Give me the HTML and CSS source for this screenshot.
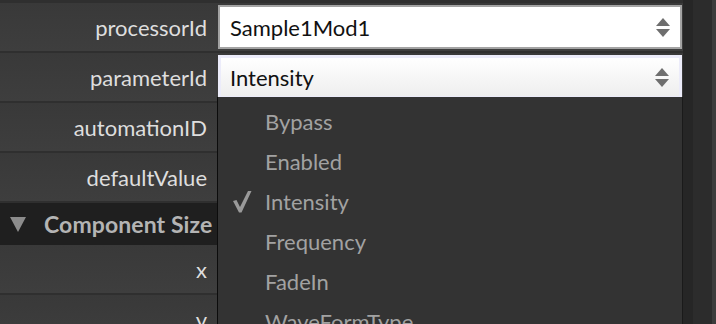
FILE: index.html
```html
<!DOCTYPE html>
<html lang="en">
<head>
  <meta charset="UTF-8" />
  <title>Property Editor</title>
  <link rel="stylesheet" href="styles.css">
</head>
<body>

  <div class="editor">
    <div class="props">
      <div class="row">
        <div class="label">processorId</div>
        <div class="value">
          <div class="combo">
            <span>Sample1Mod1</span>
            <svg class="arrows" width="14" height="20" viewBox="0 0 14 20">
              <path d="M7 1 L14 9 L0 9 Z" fill="#6e6e6e"/>
              <path d="M0 12 L14 12 L7 20 Z" fill="#6e6e6e"/>
            </svg>
          </div>
        </div>
      </div>

      <div class="row">
        <div class="label">parameterId</div>
        <div class="value">
          <div class="combo open">
            <span>Intensity</span>
            <svg class="arrows" width="14" height="20" viewBox="0 0 14 20">
              <path d="M7 1 L14 9 L0 9 Z" fill="#6e6e6e"/>
              <path d="M0 12 L14 12 L7 20 Z" fill="#6e6e6e"/>
            </svg>
          </div>
        </div>
      </div>

      <div class="row">
        <div class="label">automationID</div>
        <div class="value"></div>
      </div>

      <div class="row">
        <div class="label">defaultValue</div>
        <div class="value"></div>
      </div>

      <div class="section">
        <svg class="toggle" width="16" height="15" viewBox="0 0 16 15">
          <path d="M0 0 L16 0 L8 15 Z" fill="#8c8c8c"/>
        </svg>
        <span>Component Size</span>
      </div>

      <div class="row">
        <div class="label">x</div>
        <div class="value"></div>
      </div>

      <div class="row">
        <div class="label">y</div>
        <div class="value"></div>
      </div>

      <div class="popup">
        <div class="item">Bypass</div>
        <div class="item">Enabled</div>
        <div class="item checked">
          <svg class="tick" width="20" height="22" viewBox="0 0 20 22">
            <path d="M1 10 L4.5 9 L8 16 L16 0 L19.5 0 L9.5 21.5 L7 21.5 Z" fill="#9a9a9a"/>
          </svg>
          Intensity
        </div>
        <div class="item">Frequency</div>
        <div class="item">FadeIn</div>
        <div class="item">WaveFormType</div>
      </div>
    </div>

    <div class="scroll">
      <div class="track"></div>
      <div class="edge"></div>
    </div>
  </div>

</body>
</html>
```

FILE: styles.css
```css
* {
  box-sizing: border-box;
}

body {
  margin: 0;
  padding: 0;
  background: #2f2f2f;
  font-family: Lato, 'Noto Sans', sans-serif;
  height: 100vh;
  overflow: hidden;
}

.editor {
  display: flex;
  height: 100vh;
}

.props {
  position: relative;
  width: 683px;
  padding-top: 3px;
  display: flex;
  flex-direction: column;
  gap: 2px;
  overflow: hidden;
  background: #2f2f2f;
}

.row {
  display: grid;
  grid-template-columns: 217px 1fr;
  height: 48px;
  flex-shrink: 0;
  background: linear-gradient(#393939, #3e3e3e);
}

.label {
  display: flex;
  align-items: center;
  justify-content: flex-end;
  padding-right: 10px;
  padding-top: 1px;
  color: #dedede;
  font-size: 22px;
}

.value {
  display: flex;
  align-items: center;
  padding-right: 1px;
}

.combo {
  flex: 1;
  height: 44px;
  margin-left: 1px;
  display: flex;
  align-items: center;
  justify-content: space-between;
  padding: 0 10px 0 10px;
  background: #fff;
  border: 2px solid #a3a3a3;
  color: #111;
  font-size: 22px;
}

.combo.open {
  border: 3px solid #ececfa;
  background: linear-gradient(#ffffff, #eeeeee);
  padding-left: 9px;
}

.section {
  display: flex;
  align-items: center;
  gap: 18px;
  height: 42px;
  flex-shrink: 0;
  margin-bottom: -2px;
  padding-left: 10px;
  background: #1f1f1f;
  color: #b4b4b4;
  font-size: 23px;
  font-weight: bold;
  letter-spacing: 0.1px;
}

.toggle {
  flex-shrink: 0;
}

.popup {
  position: absolute;
  top: 97px;
  left: 217px;
  right: 0;
  bottom: 0;
  padding-top: 4px;
  background: #333333;
  border-left: 1px solid #0c0c0c;
  border-right: 1px solid #1a1a1a;
}

.item {
  position: relative;
  height: 40px;
  display: flex;
  align-items: center;
  padding-left: 47px;
  color: #a2a2a2;
  font-size: 22px;
}

.tick {
  position: absolute;
  left: 14px;
  top: 10px;
}

.scroll {
  flex: 1;
  display: flex;
  background: #262626;
  padding-left: 10px;
}

.track {
  flex: 1;
  background: #2c2c2c;
}

.edge {
  width: 4px;
  background: #3c3c3c;
}
```
